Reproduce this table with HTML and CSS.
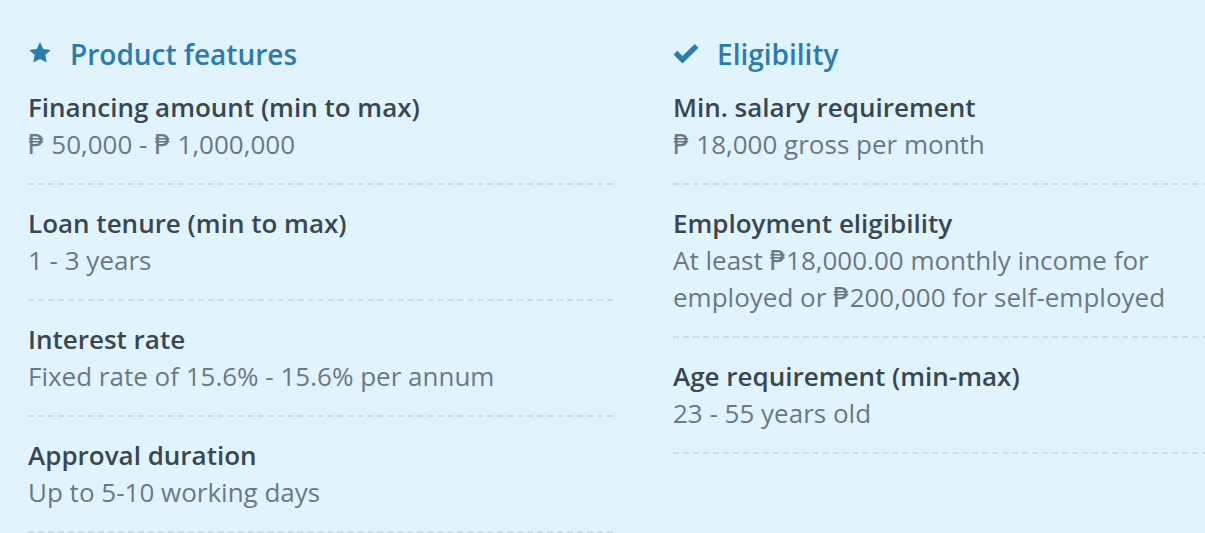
FILE: index.html
```html
<!DOCTYPE html>
<html>
<head>
<meta charset="utf-8">
<link rel="stylesheet" href="styles.css">
</head>
<body>
<div class="page">
  <section class="col">
    <h2 class="title">
      <svg class="icon star" viewBox="0 0 24 24" width="24" height="24"><path d="M12 1l3.3 7 7.5.9-5.5 5.2 1.4 7.5L12 17.9l-6.7 3.7 1.4-7.5L1.2 8.9l7.5-.9z" fill="currentColor"/></svg>
      Product features
    </h2>
    <div class="item"><div class="label">Financing amount (min to max)</div><div class="value">₱ 50,000 - ₱ 1,000,000</div></div>
    <div class="item"><div class="label">Loan tenure (min to max)</div><div class="value">1 - 3 years</div></div>
    <div class="item"><div class="label">Interest rate</div><div class="value">Fixed rate of 15.6% - 15.6% per annum</div></div>
    <div class="item"><div class="label">Approval duration</div><div class="value">Up to 5-10 working days</div></div>
  </section>
  <section class="col">
    <h2 class="title">
      <svg class="icon check" viewBox="0 0 26 20" width="26" height="20"><path d="M0.5 10.5l3.8-3.8 5.2 5.2L21.7 0 25.5 3.8 9.5 19.6z" fill="currentColor"/></svg>
      Eligibility
    </h2>
    <div class="item"><div class="label">Min. salary requirement</div><div class="value">₱ 18,000 gross per month</div></div>
    <div class="item"><div class="label">Employment eligibility</div><div class="value">At least ₱18,000.00 monthly income for employed or ₱200,000 for self-employed</div></div>
    <div class="item"><div class="label">Age requirement (min-max)</div><div class="value">23 - 55 years old</div></div>
  </section>
</div>
</body>
</html>
```

FILE: styles.css
```css
html, body {
  margin: 0;
  padding: 0;
  background: #e1f4fd;
  overflow: hidden;
}
body {
  font-family: "Open Sans", "DejaVu Sans", sans-serif;
  width: 1205px;
  height: 533px;
}
.page {
  display: grid;
  grid-template-columns: 585px 585px;
  column-gap: 60px;
  padding-left: 28px;
}
.title {
  margin: 39px 0 0 0;
  font-size: 28px;
  line-height: 30px;
  font-weight: 600;
  color: #2a7cb1;
  display: flex;
  align-items: center;
  gap: 18px;
}
.icon {
  flex: none;
}
.star {
  margin-top: -2px;
}
.item {
  padding: 20px 0 20px;
  border-bottom: 2px dashed #cfdde6;
}
.label {
  font-size: 26px;
  line-height: 37px;
  font-weight: 600;
  color: #3b4650;
}
.value {
  font-size: 26px;
  line-height: 37px;
  color: #6c7883;
}
```
